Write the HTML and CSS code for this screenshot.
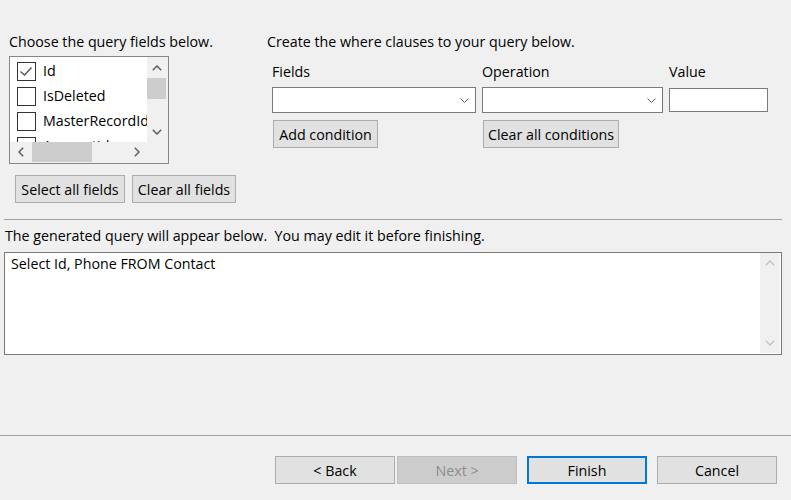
FILE: index.html
```html
<!DOCTYPE html>
<html>
<head>
<meta charset="utf-8">
<title>Query Builder</title>
<link rel="stylesheet" href="styles.css">
</head>
<body>
<div class="window">
  <div class="top">
    <section class="fields-pane">
      <div class="label">Choose the query fields below.</div>
      <div class="listbox">
        <div class="list-content">
          <div class="item"><span class="cb"><svg width="19" height="19" viewBox="0 0 19 19"><path d="M3.5 9.5 L7.5 13 L14.5 5.5" fill="none" stroke="#555" stroke-width="1.4"/></svg></span><span>Id</span></div>
          <div class="item"><span class="cb"></span><span>IsDeleted</span></div>
          <div class="item"><span class="cb"></span><span>MasterRecordId</span></div>
          <div class="item"><span class="cb"></span><span>AccountId</span></div>
        </div>
        <div class="vscroll">
          <div class="sbtn"><svg width="10" height="6" viewBox="0 0 10 6"><path d="M0.8 5.2 L5 1 L9.2 5.2" fill="none" stroke="#606060" stroke-width="1.5"/></svg></div>
          <div class="vtrack"><div class="vthumb"></div></div>
          <div class="sbtn"><svg width="10" height="6" viewBox="0 0 10 6"><path d="M0.8 0.8 L5 5 L9.2 0.8" fill="none" stroke="#606060" stroke-width="1.5"/></svg></div>
        </div>
        <div class="hscroll">
          <div class="sbtn hbtn"><svg width="6" height="10" viewBox="0 0 6 10"><path d="M5.2 0.8 L1 5 L5.2 9.2" fill="none" stroke="#606060" stroke-width="1.5"/></svg></div>
          <div class="htrack"><div class="hthumb"></div></div>
          <div class="sbtn hbtn"><svg width="6" height="10" viewBox="0 0 6 10"><path d="M0.8 0.8 L5 5 L0.8 9.2" fill="none" stroke="#606060" stroke-width="1.5"/></svg></div>
        </div>
        <div class="corner"></div>
      </div>
      <div class="btn-row">
        <button class="btn w-select">Select all fields</button>
        <button class="btn w-clear">Clear all fields</button>
      </div>
    </section>
    <section class="where-pane">
      <div class="label">Create the where clauses to your query below.</div>
      <div class="where-grid">
        <div class="label">Fields</div>
        <div class="label">Operation</div>
        <div class="label">Value</div>
        <div class="combo"><svg width="9" height="5" viewBox="0 0 9 5"><path d="M0.5 0.5 L4.5 4.5 L8.5 0.5" fill="none" stroke="#606060" stroke-width="1"/></svg></div>
        <div class="combo"><svg width="9" height="5" viewBox="0 0 9 5"><path d="M0.5 0.5 L4.5 4.5 L8.5 0.5" fill="none" stroke="#606060" stroke-width="1"/></svg></div>
        <div class="textbox"></div>
        <div class="cell"><button class="btn w-add">Add condition</button></div>
        <div class="cell"><button class="btn w-clearcond">Clear all conditions</button></div>
        <div class="cell"></div>
      </div>
    </section>
  </div>
  <div class="sep"></div>
  <div class="label query-label">The generated query will appear below.&nbsp; You may edit it before finishing.</div>
  <div class="query-box">
    <div class="query-text">Select Id, Phone FROM Contact</div>
    <div class="qscroll">
      <div class="qbtn"><svg width="10" height="6" viewBox="0 0 10 6"><path d="M0.8 5.2 L5 1 L9.2 5.2" fill="none" stroke="#c2c2c2" stroke-width="1.3"/></svg></div>
      <div class="qbtn"><svg width="10" height="6" viewBox="0 0 10 6"><path d="M0.8 0.8 L5 5 L9.2 0.8" fill="none" stroke="#c2c2c2" stroke-width="1.3"/></svg></div>
    </div>
  </div>
  <footer class="footer">
    <button class="btn nav">&lt; Back</button>
    <button class="btn nav disabled">Next &gt;</button>
    <button class="btn nav default">Finish</button>
    <button class="btn nav">Cancel</button>
  </footer>
</div>
</body>
</html>
```

FILE: styles.css
```css
* { box-sizing: border-box; }

html, body {
  margin: 0;
  padding: 0;
}

body {
  background: #f0f0f0;
  font-family: "Open Sans", "Noto Sans", sans-serif;
  font-size: 14.25px;
  color: #000;
}

.window {
  width: 791px;
  height: 500px;
  display: flex;
  flex-direction: column;
  overflow: hidden;
}

.label {
  line-height: 20px;
  height: 20px;
  white-space: nowrap;
}

.top {
  height: 219px;
  padding-top: 32px;
  display: flex;
}

.fields-pane {
  margin-left: 9px;
  width: 258px;
}

.listbox {
  margin-top: 4px;
  width: 160px;
  height: 108px;
  border: 1px solid #828790;
  display: grid;
  grid-template-columns: 137px 21px;
  grid-template-rows: 85px 21px;
  background: #f0f0f0;
}

.list-content {
  background: #fff;
  overflow: hidden;
  padding: 2px 0 0 7px;
}

.item {
  height: 25px;
  display: flex;
  align-items: center;
  white-space: nowrap;
}

.item span:last-child {
  margin-left: 7px;
  line-height: 20px;
  position: relative;
  top: -1px;
}

.cb {
  flex: none;
  width: 19px;
  height: 19px;
  border: 1px solid #333;
  background: #fff;
  display: flex;
}

.cb svg {
  margin: -1px;
}

.vscroll {
  display: flex;
  flex-direction: column;
  width: 19px;
}

.sbtn {
  height: 21px;
  display: flex;
  align-items: center;
  justify-content: center;
  flex: none;
}

.vtrack {
  flex: 1;
}

.vthumb {
  height: 21px;
  background: #cdcdcd;
}

.hscroll {
  display: flex;
  height: 20px;
}

.hbtn {
  width: 22px;
  height: 20px;
}

.hbtn:last-child {
  width: 21px;
}

.htrack {
  flex: 1;
}

.hthumb {
  width: 60px;
  height: 20px;
  background: #cdcdcd;
}

.btn-row {
  margin: 11px 0 0 6px;
  display: flex;
  gap: 7px;
}

.btn {
  font: inherit;
  color: #000;
  height: 28px;
  padding: 1px 0 0;
  background: #e1e1e1;
  border: 1px solid #adadad;
  border-radius: 0;
  white-space: nowrap;
  line-height: 20px;
}

.w-select { width: 110px; }
.w-clear { width: 104px; }
.w-add { width: 105px; }
.w-clearcond { width: 136px; }

.where-pane {
  flex: 1;
}

.where-grid {
  margin: 10px 0 0 5px;
  display: grid;
  grid-template-columns: 204px 181px 99px;
  column-gap: 6px;
}

.combo {
  margin-top: 5px;
  height: 26px;
  background: #fff;
  border: 1px solid #7a7a7a;
  display: flex;
  align-items: center;
  justify-content: flex-end;
  padding-right: 6px;
}

.textbox {
  margin-top: 6px;
  height: 24px;
  background: #fff;
  border: 1px solid #7a7a7a;
}

.cell {
  padding: 7px 0 0 1px;
}

.sep {
  margin: 0 9px 0 4px;
  height: 1px;
  background: #a0a0a0;
  flex: none;
}

.query-label {
  margin: 6px 0 0 5px;
}

.query-box {
  margin: 6px 9px 0 4px;
  height: 103px;
  border: 1px solid #7a7a7a;
  background: #fff;
  display: flex;
}

.query-text {
  flex: 1;
  padding: 1px 0 0 6px;
  line-height: 20px;
}

.qscroll {
  width: 20px;
  margin: 0 1px 1px 0;
  background: #f0f0f0;
  display: flex;
  flex-direction: column;
  justify-content: space-between;
}

.qbtn {
  height: 20px;
  display: flex;
  align-items: center;
  justify-content: center;
}

.footer {
  margin-top: auto;
  height: 65px;
  border-top: 1px solid #a0a0a0;
  padding: 20px 14px 0 0;
  display: flex;
  justify-content: flex-end;
  align-items: flex-start;
}

.nav {
  width: 120px;
  margin-left: 10px;
}

.nav.disabled {
  margin-left: 2px;
  background: #cccccc;
  border-color: #bfbfbf;
  color: #8d8d8d;
}

.nav.default {
  border: 2px solid #0078d7;
}
```
